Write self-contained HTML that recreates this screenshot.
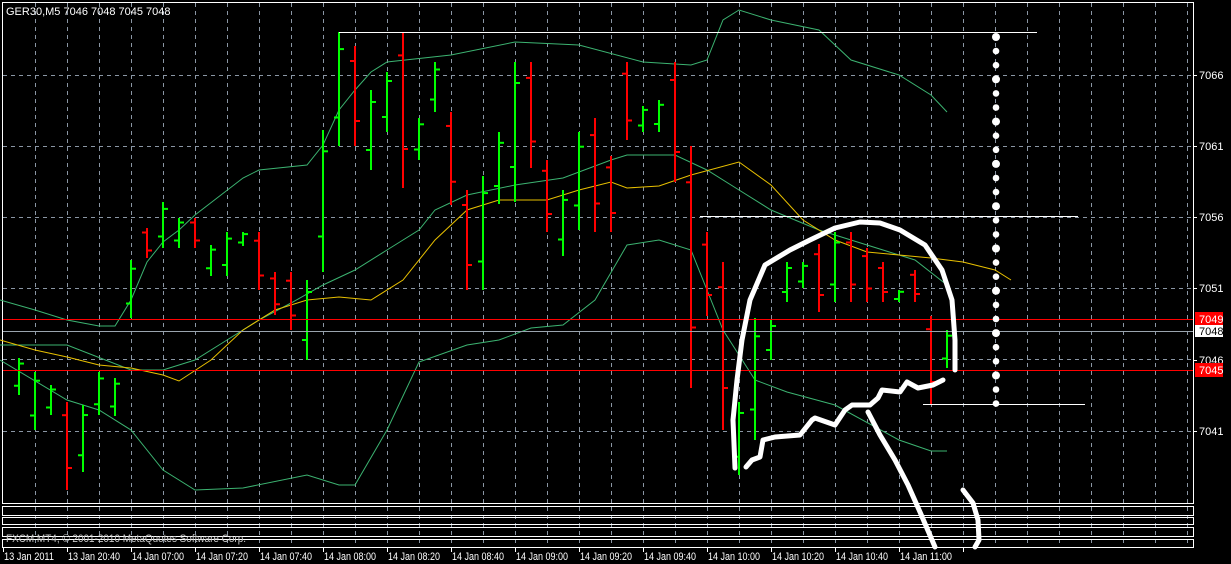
<!DOCTYPE html>
<html><head><meta charset="utf-8"><style>
html,body{margin:0;padding:0;background:#000;width:1231px;height:564px;overflow:hidden}
svg{display:block}
text{font-family:"Liberation Sans",sans-serif;font-size:11px}
</style></head><body>
<svg id="s" width="1231" height="564" xmlns="http://www.w3.org/2000/svg">
<rect width="1231" height="564" fill="#000"/>
<g id="grid"></g>
<g id="ind" fill="none" stroke-width="1"></g>
<g id="bars" stroke-width="2"></g>
<g id="lines"></g>
<g id="draw" fill="none" stroke="#fff" stroke-width="5" stroke-linecap="round" stroke-linejoin="round"></g>
<g id="axis"></g>
<text x="6" y="15" fill="#fff" font-size="12">GER30,M5  7046 7048 7045 7048</text>
</svg>
<script>
const NS="http://www.w3.org/2000/svg";
function el(p,t,a,txt){const e=document.createElementNS(NS,t);for(const k in a)e.setAttribute(k,a[k]);if(txt!=null)e.textContent=txt;document.getElementById(p).appendChild(e);return e;}
for(let x=35;x<1194;x+=32)el('grid','line',{x1:x+.5,y1:3,x2:x+.5,y2:547,stroke:'#8a96a4','stroke-dasharray':'4,4'});
[75,146,217,288,359,431].forEach(y=>el('grid','line',{x1:3,y1:y+.5,x2:1193,y2:y+.5,stroke:'#8a96a4','stroke-dasharray':'4,4'}));
el('grid','rect',{x:2.5,y:2.5,width:1191,height:501,fill:'none',stroke:'#fff'});
[[506,9],[517,7],[527,9],[539,8]].forEach(r=>el('grid','rect',{x:2.5,y:r[0]+.5,width:1191,height:r[1],fill:'none',stroke:'#fff'}));
function pl(pts,c){el('ind','polyline',{points:pts.map(p=>p.join(',')).join(' '),stroke:c});}
pl([[0,300],[35,310],[67,320],[99,326],[115,326],[131,300],[147,262],[163,242],[179,230],[195,215],[243,178],[259,170],[307,165],[323,145],[339,110],[355,90],[371,72],[387,62],[451,55],[515,42],[579,45],[643,62],[691,65],[707,60],[723,20],[739,10],[771,20],[819,30],[851,60],[899,75],[931,95],[947,112]],'#3cb371');
pl([[0,345],[67,345],[131,370],[163,370],[195,360],[227,340],[259,320],[291,303],[323,285],[355,270],[387,250],[419,230],[435,210],[467,195],[515,185],[563,178],[611,160],[627,155],[675,155],[707,170],[739,190],[771,210],[819,230],[867,245],[915,260],[947,285]],'#3cb371');
pl([[0,360],[67,400],[99,410],[131,430],[163,470],[195,490],[243,488],[307,475],[339,485],[355,485],[387,430],[419,362],[467,345],[499,340],[531,328],[563,325],[595,300],[627,245],[659,240],[691,250],[723,330],[755,380],[787,392],[835,405],[899,440],[931,451],[947,451]],'#3cb371');
pl([[0,340],[35,350],[67,357],[99,365],[131,368],[163,375],[179,381],[211,360],[243,330],[275,310],[307,300],[339,297],[371,300],[403,280],[435,240],[467,210],[499,200],[547,200],[579,190],[611,182],[627,188],[659,186],[691,175],[739,162],[771,185],[803,220],[835,240],[867,252],[899,255],[931,258],[963,262],[995,270],[1011,280]],'#e8c000');
const B=[[19,'g',358,395],[35,'g',372,430],[51,'g',385,415],[67,'r',402,490],[83,'g',405,472],[99,'g',372,415],[115,'g',378,416],[131,'g',260,318],[147,'r',228,258],[163,'g',202,248],[179,'g',218,248],[195,'r',218,248],[211,'g',245,276],[227,'g',232,276],[243,'g',232,246],[259,'r',232,290],[275,'r',272,315],[291,'r',272,330],[307,'g',280,360],[323,'g',130,272],[339,'g',32,146],[355,'r',46,146],[371,'g',90,170],[387,'g',72,132],[403,'r',32,188],[419,'g',118,160],[435,'g',62,112],[451,'r',112,205],[467,'r',190,290],[483,'g',176,290],[499,'g',132,204],[515,'g',62,202],[531,'r',62,168],[547,'r',160,232],[563,'g',190,256],[579,'g',132,230],[595,'r',118,232],[611,'r',156,232],[627,'r',62,140],[643,'g',106,132],[659,'g',100,132],[675,'r',62,182],[691,'r',146,388],[707,'r',232,316],[723,'r',262,430],[739,'g',402,475],[755,'g',318,440],[771,'g',320,360],[787,'g',262,302],[803,'g',262,288],[819,'r',244,312],[835,'g',232,302],[851,'r',232,302],[867,'r',248,302],[883,'r',262,302],[899,'g',290,302],[915,'r',270,302],[931,'r',316,404],[947,'g',330,368]];
B.forEach(b=>{const c=b[1]=='g'?'#00ff00':'#ff0000';const[x,,h,l]=b;
 let o,cl; if(b[1]=='g'){o=l-(l-h)*0.25;cl=h+(l-h)*0.15;}else{o=h+(l-h)*0.15;cl=l-(l-h)*0.25;}
 el('bars','line',{x1:x,y1:h,x2:x,y2:l,stroke:c});
 el('bars','line',{x1:x-5,y1:o,x2:x,y2:o,stroke:c});
 el('bars','line',{x1:x,y1:cl,x2:x+5,y2:cl,stroke:c});});
el('lines','line',{x1:339,y1:32.5,x2:1037,y2:32.5,stroke:'#fff'});
el('lines','line',{x1:700,y1:216.5,x2:1078,y2:216.5,stroke:'#fff'});
el('lines','line',{x1:923,y1:404.5,x2:1085,y2:404.5,stroke:'#fff'});
el('lines','line',{x1:3,y1:319.5,x2:1193,y2:319.5,stroke:'#ff0000'});
el('lines','line',{x1:3,y1:331.5,x2:1193,y2:331.5,stroke:'#9aa4ae'});
el('lines','line',{x1:3,y1:370.5,x2:1193,y2:370.5,stroke:'#ff0000'});
for(let y=37;y<=404;y+=14.1)el('lines','circle',{cx:996,cy:y,r:(Math.round((y-37)/14.1)%3==0)?4:3.3,fill:'#fff'});
function dp(pts){el('draw','polyline',{points:pts.map(p=>p.join(',')).join(' ')});}
dp([[735,468],[733,420],[737,380],[742,340],[750,300],[765,265],[790,250],[810,240],[835,228],[860,222],[880,223],[900,230],[925,245],[942,270],[952,300],[955,340],[955,370]]);
dp([[746,467],[752,460],[760,457],[763,440],[775,437],[800,435],[812,420],[815,418],[835,425],[845,410],[852,405],[870,405],[878,398],[882,390],[900,392],[907,382],[918,388],[933,385],[943,380]]);
dp([[868,412],[880,435],[895,460],[908,485],[920,512],[935,547]]);
dp([[963,490],[973,503],[978,520],[979,540],[975,547]]);
[[75,'7066'],[146,'7061'],[217,'7056'],[288,'7051'],[360,'7046'],[431,'7041']].forEach(a=>{el('axis','line',{x1:1194,y1:a[0]+.5,x2:1197,y2:a[0]+.5,stroke:'#fff'});el('axis','text',{x:1199,y:a[0]+4,fill:'#fff'},a[1]);});
el('axis','rect',{x:1195,y:312,width:28,height:13,fill:'#ff0000'});el('axis','text',{x:1199,y:323,fill:'#fff'},'7049');
el('axis','rect',{x:1195,y:325,width:28,height:12,fill:'#fff'});el('axis','text',{x:1199,y:335,fill:'#000'},'7048');
el('axis','rect',{x:1195,y:363,width:28,height:14,fill:'#ff0000'});el('axis','text',{x:1199,y:374,fill:'#fff'},'7045');
el('axis','text',{x:6,y:542,fill:'#c8c8c8',textLength:240,lengthAdjust:'spacingAndGlyphs'},'FXCM MT4, © 2001-2010 MetaQuotes Software Corp.');
const T=[[3,'13 Jan 2011',50],[67,'13 Jan 20:40',52]];
['07:00','07:20','07:40','08:00','08:20','08:40','09:00','09:20','09:40','10:00','10:20','10:40','11:00'].forEach((t,i)=>T.push([131+64*i,'14 Jan '+t,52]));
T.push([963,'',0]);
T.forEach(t=>{el('axis','line',{x1:t[0]+.5,y1:547,x2:t[0]+.5,y2:552,stroke:'#fff'});if(t[1])el('axis','text',{x:t[0]+1,y:560,fill:'#fff',textLength:t[2],lengthAdjust:'spacingAndGlyphs'},t[1]);});
</script>
</body></html>
